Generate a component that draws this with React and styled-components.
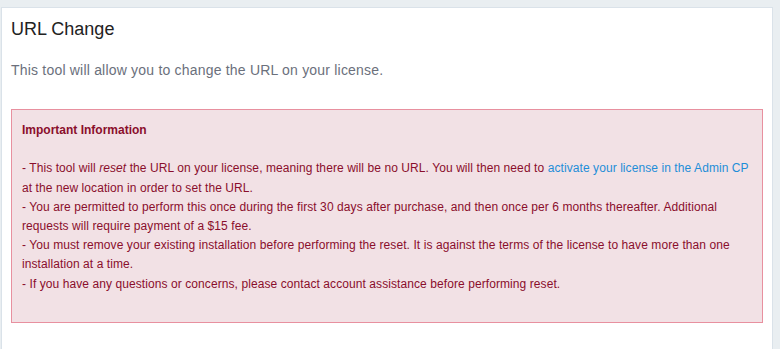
import React from "react";
import styled, { createGlobalStyle } from "styled-components";

const Global = createGlobalStyle`
  html, body {
    margin: 0;
    padding: 0;
    background: #e9eef1;
    font-family: "Liberation Sans", Arial, sans-serif;
  }
`;

const Page = styled.div`
  padding: 7px 0 0 1px;
  height: 342px;
  overflow: hidden;
`;

const Panel = styled.section`
  width: 772px;
  min-height: 360px;
  background: #ffffff;
  border: 1px solid #dae2e9;
  padding: 11px 9px 0;
  box-sizing: border-box;
`;

const Title = styled.h2`
  margin: 0;
  font-size: 18px;
  line-height: 21px;
  font-weight: normal;
  color: #222222;
`;

const Lead = styled.p`
  margin: 22px 0 0;
  font-size: 14px;
  line-height: 16px;
  letter-spacing: 0.2px;
  color: #6b707c;
`;

const Alert = styled.div`
  margin-top: 31px;
  background: #f2e1e5;
  border: 1px solid #e8909f;
  padding: 11px 10px 28px;
  font-size: 12px;
  line-height: 19.2px;
  letter-spacing: 0.08px;
  color: #8a0e2c;
`;

const AlertTitle = styled.div`
  font-weight: bold;
  letter-spacing: 0;
  margin-bottom: 19.2px;
`;

const Item = styled.div``;

const Link = styled.a`
  color: #1f8ed8;
  text-decoration: none;
`;

export default function App() {
  return (
    <>
      <Global />
      <Page>
        <Panel>
          <Title>URL Change</Title>
          <Lead>This tool will allow you to change the URL on your license.</Lead>
          <Alert>
            <AlertTitle>Important Information</AlertTitle>
            <Item>
              - This tool will <i>reset</i> the URL on your license, meaning there will be no URL. You will then need to{" "}
              <Link href="#">activate your license in the Admin CP</Link> at the new location in order to set the URL.
            </Item>
            <Item>
              - You are permitted to perform this once during the first 30 days after purchase, and then once per 6 months thereafter. Additional requests will require payment of a $15 fee.
            </Item>
            <Item>
              - You must remove your existing installation before performing the reset. It is against the terms of the license to have more than one installation at a time.
            </Item>
            <Item>
              - If you have any questions or concerns, please contact account assistance before performing reset.
            </Item>
          </Alert>
        </Panel>
      </Page>
    </>
  );
}
